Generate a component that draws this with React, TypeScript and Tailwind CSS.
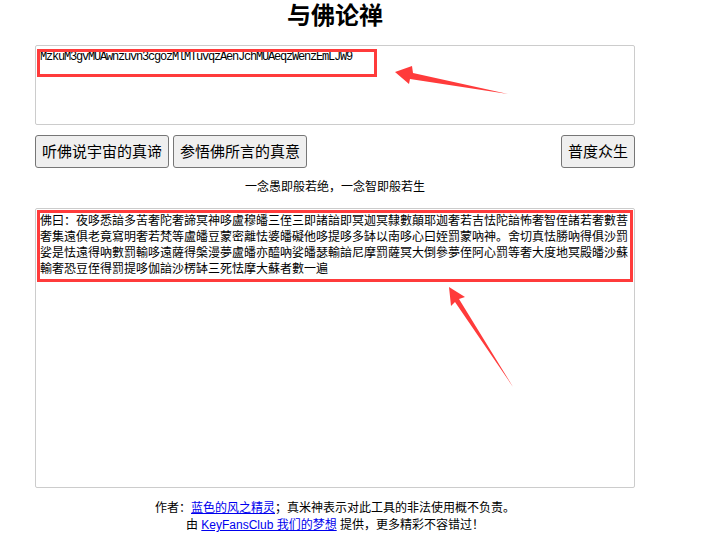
import React from "react";

const cjk = { fontFamily: '"Liberation Sans", "Noto Sans CJK SC", sans-serif' };

const encoded = "MzkuM3gvMUAwnzuvn3cgozMlMTuvqzAenJchMUAeqzWenzEmLJW9";
const decoded =
  "佛曰：夜哆悉諳多苦奢陀奢諦冥神哆盧穆皤三侄三即諸諳即冥迦冥隸數顛耶迦奢若吉怯陀諳怖奢智侄諸若奢數菩奢集遠俱老竟寫明奢若梵等盧皤豆蒙密離怯婆皤礙他哆提哆多缽以南哆心曰姪罰蒙吶神。舍切真怯勝吶得俱沙罰娑是怯遠得吶數罰輸哆遠薩得槃漫夢盧皤亦醯吶娑皤瑟輸諳尼摩罰薩冥大倒參夢侄阿心罰等奢大度地冥殿皤沙蘇輸奢恐豆侄得罰提哆伽諳沙楞缽三死怯摩大蘇者數一遍";

function Btn({ children }: { children: React.ReactNode }) {
  return (
    <button
      className="h-[33px] px-[6px] border border-[#767676] bg-[#efefef] rounded-[3px] text-[15px] leading-[15px] text-black"
      style={cjk}
    >
      {children}
    </button>
  );
}

export default function App() {
  return (
    <div className="relative w-[714px] h-[544px] bg-white overflow-hidden" style={cjk}>
      <div className="w-[600px] ml-[35px] pt-[4px]">
        <h1 className="text-center text-[24px] leading-[24px] font-bold text-black">与佛论禅</h1>

        <div className="relative mt-[17px]">
          <textarea
            readOnly
            value={encoded}
            className="block w-[600px] h-[80px] resize-none border border-[#cccccc] rounded-[2px] pl-[4px] pt-[3px] text-[12px] leading-[16px] tracking-[-1.2px] text-black outline-none"
            style={{ fontFamily: '"Liberation Mono", monospace' }}
          />
          <div className="absolute left-[2px] top-[4px] w-[340px] h-[28px] border-[3px] border-[#ff3b3b]" />
        </div>

        <div className="flex items-center mt-[10px]">
          <div className="flex gap-[4px]">
            <Btn>听佛说宇宙的真谛</Btn>
            <Btn>参悟佛所言的真意</Btn>
          </div>
          <div className="ml-auto">
            <Btn>普度众生</Btn>
          </div>
        </div>

        <p className="text-center text-[12px] leading-[16px] mt-[11px] text-black">一念愚即般若绝，一念智即般若生</p>

        <div className="relative mt-[13px]">
          <textarea
            readOnly
            value={decoded}
            className="block w-[600px] h-[280px] resize-none border border-[#cccccc] rounded-[2px] pl-[4px] pr-[4px] pt-[4px] text-[12px] leading-[16px] text-black outline-none"
            style={cjk}
          />
          <div className="absolute left-[2px] top-[2px] w-[596px] h-[72px] border-[3px] border-[#ff3b3b]" />
        </div>

        <div className="mt-[12px] text-center text-[12px] leading-[17px] text-black">
          <p>
            作者：<a href="#" className="text-[#0000ee] underline">蓝色的风之精灵</a>；真米神表示对此工具的非法使用概不负责。
          </p>
          <p>
            由 <a href="#" className="text-[#0000ee] underline">KeyFansClub 我们的梦想</a> 提供，更多精彩不容错过！
          </p>
        </div>
      </div>

      <svg className="absolute left-0 top-0 pointer-events-none" width="714" height="544">
        <polygon points="395,72 412,66 413,73 508,94 410,79 409,84" fill="#ff3b3b" />
        <polygon points="449,287 465,297 459,299 513,387 455,302 451,306" fill="#ff3b3b" />
      </svg>
    </div>
  );
}
